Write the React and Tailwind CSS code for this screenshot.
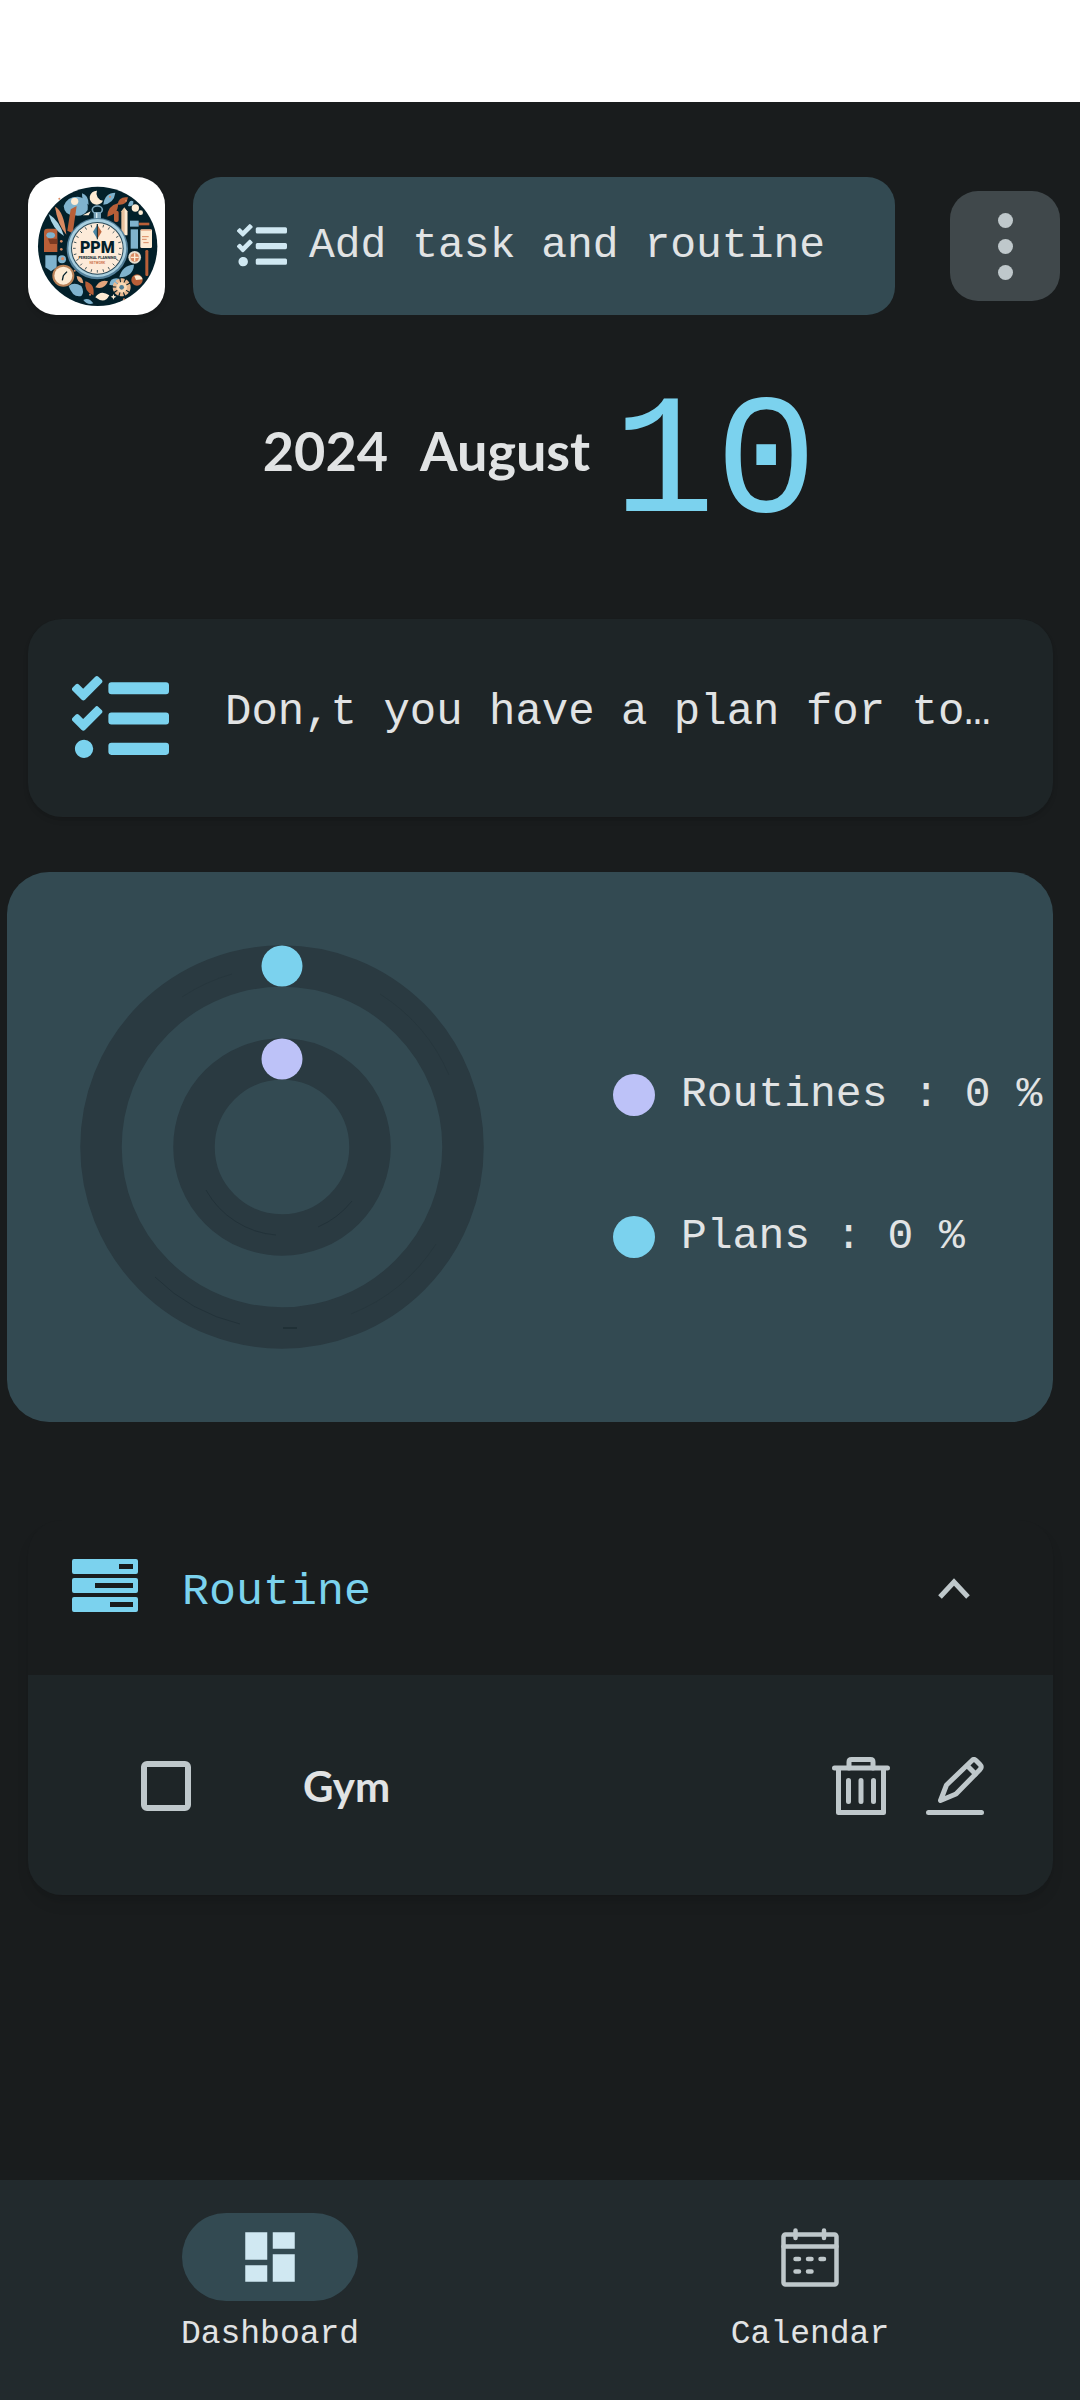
import React from "react";
import { FaTasks } from "react-icons/fa";
import { MdDashboard } from "react-icons/md";

const MONO = "font-['Liberation_Mono',monospace]";
const HAND = "font-['Lato',sans-serif]";

function Logo() {
  const ticks = Array.from({ length: 24 }, (_, i) => i * 15);
  return (
    <svg viewBox="24 21 411 414" className="h-full w-full" role="img" aria-label="PPM logo">
      <circle cx="233" cy="229" r="179" fill="#03202a" />
      <path d="M231 62a21 21 0 1 0 18 30a22 22 0 0 1-18-30z" fill="#fdebd3" />
      <path d="M131 108q10-28 42-28q34 4 30 40q-14 22-40 16q-30 0-32-28z" fill="#7fb3ce" />
      <circle cx="164" cy="94" r="11" fill="#fdebd3" />
      <g fill="#b85f38">
        <path d="M105 110q26 12 34 84q-26-30-34-84z" fill="#d98a62" />
        <path d="M152 118l18-10l-12 82l-16-8z" />
        <path d="M262 140q0-32 32-40q2 32-32 40z" />
        <path d="M292 104q4-26 32-22q-4 26-32 22z" />
        <rect x="282" y="122" width="14" height="34" rx="6" />
        <path d="M100 176h12v70h-40v-60q0-10 10-10z" />
        <path d="M84 206h28v16h-22z" fill="#7b3a22" />
        <rect x="376" y="240" width="9" height="78" rx="4" />
        <rect x="356" y="158" width="32" height="8" />
        <path d="M196 334q30 8 24 42q-28-10-24-42z" />
        <path d="M226 352q14-26 38-18q-10 26-38 18z" fill="#e3a57c" />
        <circle cx="351" cy="330" r="17" />
        <path d="M170 318q18 0 20 22q-18 0-20-22z" fill="#e3a57c" />
      </g>
      <g fill="#7fb3ce">
        <path d="M86 132q32 20 46 66q-34-20-46-66z" fill="#a9d3e4" />
        <path d="M250 104q4-36 36-36q-4 32-36 36z" />
        <path d="M186 70q20 6 20 34q-22-10-20-34z" />
        <rect x="330" y="152" width="26" height="18" />
        <rect x="332" y="178" width="22" height="58" />
        <path d="M76 256h34v36l-17 12l-17-12z" />
        <path d="M146 348q16-14 38 0q10 18 0 30q-26 6-38-30z" />
        <path d="M298 322q8-36 44-38q-2 36-44 38z" />
        <path d="M268 344q4-24 30-18q-2 26-30 18z" />
        <path d="M190 390q16-10 30 10q-18 6-30-10z" />
        <path d="M324 108q4-20 16-14q2 18-16 14z" />
      </g>
      <ellipse cx="92" cy="196" rx="13" ry="9" fill="#7fb3ce" />
      <g fill="#fdebd3">
        <path d="M304 124l9-12l9 12v70h-18z" fill="#e8c29e" />
        <path d="M314 116l8 8v72h-8z" />
        <rect x="361" y="178" width="35" height="56" rx="4" />
        <path d="M188 136l24-12l-6 12z" />
        <circle cx="346" cy="114" r="11" />
        <circle cx="362" cy="128" r="7" />
        <path d="M226 382q16-24 42-6q-14 28-42 6z" />
        <path d="M343 318a17 17 0 0 1 25 10l-20 2z" />
        <path d="M280 372l3 6l6 2l-6 3l-3 6l-2-6l-6-3l6-2z" />
      </g>
      <path d="M363 180h30M366 200h20M366 208h14M370 218h16" stroke="#d98a62" strokeWidth="3" />
      <circle cx="344" cy="262" r="19" fill="#e8dfd0" />
      <circle cx="344" cy="262" r="13" fill="#d98a62" />
      <path d="M344 250v24M332 262h24" stroke="#fdebd3" strokeWidth="4" />
      <circle cx="126" cy="268" r="12" fill="#7fb3ce" />
      <circle cx="128" cy="266" r="5" fill="#d98a62" />
      <circle cx="130" cy="317" r="33" fill="#b98258" />
      <circle cx="130" cy="317" r="27" fill="#fdebd3" />
      <path d="M130 317l11-12M130 317l-3 14" stroke="#03202a" strokeWidth="4" />
      <circle cx="305" cy="352" r="20" fill="none" stroke="#e8b890" strokeWidth="14" strokeDasharray="10 3" />
      <circle cx="305" cy="352" r="16" fill="#fbd9b4" />
      <circle cx="305" cy="352" r="7" fill="#4f7c92" />
      <g fill="#d98a62">
        <circle cx="118" cy="86" r="3" /><circle cx="210" cy="374" r="3" /><circle cx="270" cy="80" r="3" />
        <circle cx="124" cy="214" r="4" /><circle cx="124" cy="238" r="4" /><circle cx="318" cy="92" r="3" />
        <circle cx="312" cy="388" r="3" /><circle cx="164" cy="302" r="3" />
      </g>
      <ellipse cx="232" cy="119" rx="15" ry="11" fill="none" stroke="#7ba5bb" strokeWidth="5" />
      <rect x="221" y="126" width="22" height="22" rx="3" fill="#7ba5bb" />
      <path d="M230 128v20" stroke="#d7ebf2" strokeWidth="4" />
      <circle cx="232" cy="236" r="92" fill="#54809a" />
      <circle cx="232" cy="234" r="87" fill="#a9cfdf" />
      <circle cx="232" cy="235" r="79" fill="#2b4a59" />
      <circle cx="232" cy="235" r="76" fill="#fdebd9" />
      {ticks.map((a) => (
        <path key={a} d="M232 162v8" stroke="#03202a" strokeWidth="2" transform={`rotate(${a} 232 235)`} />
      ))}
      <path d="M232 164l-13 21l13 22z" fill="#4b87a5" />
      <path d="M232 164l13 21l-13 22z" fill="#c26c43" />
      <path d="M232 162v46" stroke="#03202a" strokeWidth="3" />
      <text x="232" y="249" textAnchor="middle" fontSize="48" fontWeight="900" fill="#03202a" fontFamily="Roboto, sans-serif">PPM</text>
      <text x="232" y="267" textAnchor="middle" fontSize="11" fontWeight="700" fill="#03202a" fontFamily="Roboto, sans-serif">PERSONAL PLANNING</text>
      <text x="232" y="283" textAnchor="middle" fontSize="10" fontWeight="700" fill="#d0794f" fontFamily="Roboto, sans-serif">NETWORK</text>
    </svg>
  );
}

function ProgressRings() {
  return (
    <svg viewBox="0 0 404 404" className="h-[404px] w-[404px] shrink-0" role="img" aria-label="Progress rings">
      <g fill="none" stroke="#2a3a41" strokeWidth="41.5">
        <circle cx="202" cy="202" r="181" />
        <circle cx="202" cy="202" r="88" />
      </g>
      <g fill="none" stroke="#17262c" strokeWidth="1">
        <path d="M203 383h14" />
        <path d="M75 332a181 181 0 0 0 85 47" opacity="0.4" />
        <path d="M271 369a181 181 0 0 0 85-70" opacity="0.2" />
        <path d="M102 52a181 181 0 0 1 50-23M300 49a181 181 0 0 1 69 81" opacity="0.2" />
        <path d="M126 245a88 88 0 0 0 70 45" opacity="0.4" />
        <path d="M238 282a88 88 0 0 0 34-26" opacity="0.4" />
      </g>
      <circle cx="202" cy="21" r="20.5" fill="#7bd2ee" />
      <circle cx="202" cy="114" r="20.5" fill="#bdc2f8" />
    </svg>
  );
}

function RoutineIcon() {
  return (
    <svg viewBox="0 0 66 54" className="h-[54px] w-[66px] shrink-0" fill="#7bd2ee" fillRule="evenodd" aria-hidden="true">
      <path d="M2 0h62q2 0 2 2v11q0 2-2 2h-62q-2 0-2-2v-11q0-2 2-2zM47 5v5h14v-5z" />
      <path d="M2 19h62q2 0 2 2v11q0 2-2 2h-62q-2 0-2-2v-11q0-2 2-2zM23 24v5h38v-5z" />
      <path d="M2 38h62q2 0 2 2v11q0 2-2 2h-62q-2 0-2-2v-11q0-2 2-2zM38 43v5h23v-5z" />
    </svg>
  );
}

function TrashIcon() {
  return (
    <svg viewBox="0 0 58 58" className="h-[58px] w-[58px]" fill="none" stroke="#bfc8cb" strokeWidth="5" strokeLinecap="round" strokeLinejoin="round" aria-hidden="true">
      <path d="M2.5 11h53M6.5 11v44.5h45V11" />
      <path d="M17 11V5q0-2.500 2.500-2.500h19q2.500 0 2.500 2.500v6" />
      <path d="M16.500 23.500v21M29 23.500v21M41.500 23.500v21" />
    </svg>
  );
}

function EditIcon() {
  return (
    <svg viewBox="0 0 58 58" className="h-[58px] w-[58px]" fill="none" stroke="#bfc8cb" strokeWidth="5" strokeLinecap="round" strokeLinejoin="round" aria-hidden="true">
      <path d="M2.500 55.500h53" />
      <path d="M14.500 43.500l6-15.500L46 3.500q2-2 4 0l4 4q2.500 2.500 0 5L30 37z" />
      <path d="M41.500 9l8 8" />
    </svg>
  );
}

function CalendarIcon() {
  return (
    <svg viewBox="0 0 58 59" className="h-[59px] w-[58px]" fill="none" stroke="#bfc8cb" strokeWidth="4.5" strokeLinecap="round" strokeLinejoin="round" aria-hidden="true">
      <rect x="2.500" y="6.500" width="53" height="50" rx="2" />
      <path d="M2.500 18.500h53M14.500 2.500v7.500M43 2.500v7.500" />
      <path d="M14.500 31h3.500M27 31h3.500M39.500 31h3.500M14.500 43.500h3.500M27 43.500h3.500" />
    </svg>
  );
}

function LegendItem({ dot, children }) {
  return (
    <li className="flex items-center gap-[26px]">
      <span className={`size-[42px] shrink-0 rounded-full ${dot}`} />
      <span className="text-[43px] leading-[42px] whitespace-pre">{children}</span>
    </li>
  );
}

export default function App() {
  return (
    <div className={`flex min-h-screen flex-col bg-[#191c1d] text-[#e1e3e4] ${MONO}`}>
      <div className="h-[102px] bg-white" />

      <header className="flex items-center pt-[75px] pr-[20px] pl-[28px]">
        <div className="h-[138px] w-[137px] shrink-0 overflow-hidden rounded-[28px] bg-white shadow-md">
          <Logo />
        </div>
        <button type="button" className="ml-[28px] flex h-[138px] min-w-0 flex-1 items-center gap-[22px] rounded-[28px] bg-[#334a52] pl-[44px] text-left">
          <FaTasks size={50} color="#d0e8f2" className="shrink-0" aria-hidden="true" />
          <span className="text-[43px] leading-[56px] whitespace-nowrap">Add task and routine</span>
        </button>
        <button type="button" aria-label="More options" className="ml-[55px] flex size-[110px] shrink-0 flex-col items-center justify-center gap-[11px] rounded-[28px] bg-[#40484b]">
          <span className="size-[15px] rounded-full bg-[#bfc8cb]" />
          <span className="size-[15px] rounded-full bg-[#bfc8cb]" />
          <span className="size-[15px] rounded-full bg-[#bfc8cb]" />
        </button>
      </header>

      <h1 className="mt-[59px] flex items-center justify-center gap-[23px]">
        <span className={`flex gap-[32px] pb-[30px] text-[54px] leading-[72px] font-bold ${HAND}`}>
          <span>2024</span>
          <span>August</span>
        </span>
        <span className="text-[170px] leading-[184px] font-normal text-[#7bd2ee]">10</span>
      </h1>

      <main className="flex flex-col pr-[27px]">
        <section className="mt-[61px] ml-[28px] flex h-[198px] items-center gap-[56px] rounded-[34px] bg-[#1e2527] pl-[44px] shadow-md">
          <FaTasks size={97} color="#7bd2ee" className="shrink-0" aria-hidden="true" />
          <p className="truncate pb-3 text-[44px] leading-[56px]">Don,t you have a plan for to…</p>
        </section>

        <section className="mt-[55px] ml-[7px] flex h-[550px] items-center rounded-[42px] bg-[#334a52] pl-[73px]">
          <ProgressRings />
          <ul className="ml-[129px] flex flex-col gap-[100px] pt-[37px]">
            <LegendItem dot="bg-[#bdc2f8]">Routines : 0 %</LegendItem>
            <LegendItem dot="bg-[#7bd2ee]">Plans : 0 %</LegendItem>
          </ul>
        </section>

        <section className="mt-[98px] ml-[28px] overflow-hidden rounded-[34px] shadow-lg">
          <h2>
            <button type="button" aria-expanded="true" className="flex h-[155px] w-full items-center bg-[#191c1d] pr-[83px] pb-[24px] pl-[44px] text-left text-[#7bd2ee]">
              <RoutineIcon />
              <span className="ml-[44px] flex-1 pt-[14px] text-[45px] leading-[56px]">Routine</span>
              <svg viewBox="0 0 32 21" className="mt-[6px] h-[21px] w-[32px]" fill="none" stroke="#bfc8cb" strokeWidth="5" aria-hidden="true">
                <path d="M2 19L16 4L30 19" />
              </svg>
            </button>
          </h2>
          <div className="flex h-[220px] items-center bg-[#1e2527] pt-[2px] pr-[69px] pl-[113px]">
            <input id="gym" type="checkbox" className="size-[50px] shrink-0 appearance-none rounded-[6px] border-[6px] border-[#bfc8cb] checked:bg-[#7bd2ee]" />
            <label htmlFor="gym" className={`ml-[112px] flex-1 text-[42px] leading-[56px] font-bold ${HAND}`}>Gym</label>
            <button type="button" aria-label="Delete Gym"><TrashIcon /></button>
            <button type="button" aria-label="Edit Gym" className="ml-[36px]"><EditIcon /></button>
          </div>
        </section>
      </main>

      <nav className="mt-auto grid h-[220px] grid-cols-2 bg-[#222a2d] pt-[33px] text-[33px] leading-[40px]">
        <a href="#dashboard" aria-current="page" className="flex flex-col items-center gap-[14px]">
          <span className="flex h-[88px] w-[176px] items-center justify-center rounded-full bg-[#334a52]">
            <MdDashboard size={66} color="#d0e8f2" aria-hidden="true" />
          </span>
          Dashboard
        </a>
        <a href="#calendar" className="flex flex-col items-center gap-[14px]">
          <span className="flex h-[88px] w-[176px] items-center justify-center">
            <CalendarIcon />
          </span>
          Calendar
        </a>
      </nav>
    </div>
  );
}
